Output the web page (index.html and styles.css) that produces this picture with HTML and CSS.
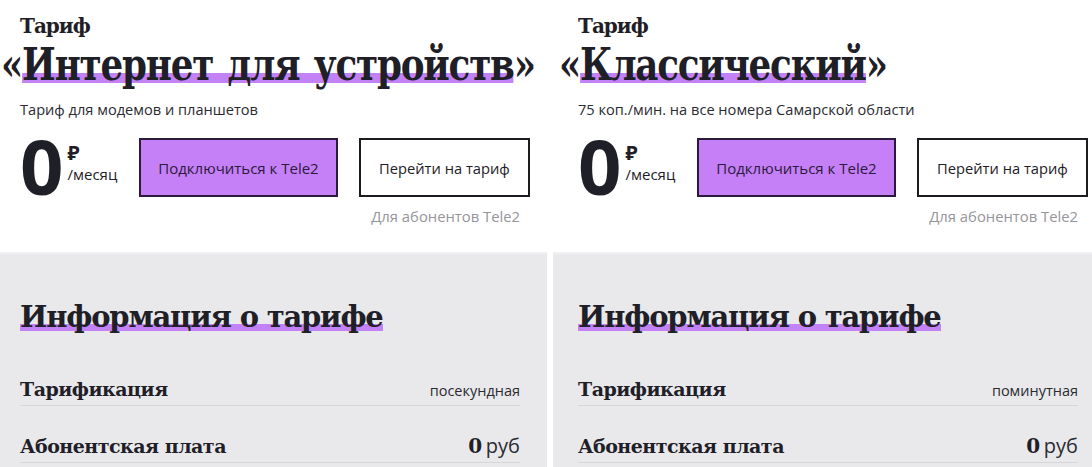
FILE: index.html
```html
<!DOCTYPE html>
<html lang="ru">
<head>
<meta charset="utf-8">
<link rel="stylesheet" href="styles.css">
</head>
<body>
<div class="page">
  <section class="panel">
    <div class="top">
      <div class="kicker">Тариф</div>
      <h1 class="title">«<span class="hl">Интернет для устройств</span>»</h1>
      <p class="sub">Тариф для модемов и планшетов</p>
      <div class="row">
        <div class="price">
          <span class="zero">0</span>
          <span class="per"><span class="rub">₽</span><span class="mon">/месяц</span></span>
        </div>
        <a class="btn btn-primary">Подключиться к Tele2</a>
        <div class="alt">
          <a class="btn btn-outline">Перейти на тариф</a>
          <span class="note">Для абонентов Tele2</span>
        </div>
      </div>
    </div>
    <div class="info">
      <h2 class="info-title"><span class="hl2">Информация о тарифе</span></h2>
      <div class="line"><span class="lbl">Тарификация</span><span class="val">посекундная</span></div>
      <div class="line"><span class="lbl">Абонентская плата</span><span class="val"><b>0</b> <span class="cur">руб</span></span></div>
    </div>
  </section>
  <section class="panel">
    <div class="top">
      <div class="kicker">Тариф</div>
      <h1 class="title">«<span class="hl">Классический</span>»</h1>
      <p class="sub">75 коп./мин. на все номера Самарской области</p>
      <div class="row">
        <div class="price">
          <span class="zero">0</span>
          <span class="per"><span class="rub">₽</span><span class="mon">/месяц</span></span>
        </div>
        <a class="btn btn-primary">Подключиться к Tele2</a>
        <div class="alt">
          <a class="btn btn-outline">Перейти на тариф</a>
          <span class="note">Для абонентов Tele2</span>
        </div>
      </div>
    </div>
    <div class="info">
      <h2 class="info-title"><span class="hl2">Информация о тарифе</span></h2>
      <div class="line"><span class="lbl">Тарификация</span><span class="val">поминутная</span></div>
      <div class="line"><span class="lbl">Абонентская плата</span><span class="val"><b>0</b> <span class="cur">руб</span></span></div>
    </div>
  </section>
</div>
</body>
</html>
```
FILE: styles.css
```css
html, body {
  margin: 0;
  padding: 0;
  background: #fff;
  overflow: hidden;
}
body {
  width: 1092px;
  height: 467px;
  color: #1f2027;
  font-family: "Open Sans", "Noto Sans", sans-serif;
}
.page {
  display: flex;
  gap: 6px;
  margin-left: -5px;
  width: 1110px;
  height: 467px;
}
.panel {
  width: 552px;
  flex: none;
  display: flex;
  flex-direction: column;
  height: 467px;
}
.top {
  background: #fff;
  padding: 14px 27px 0 25px;
  height: 242px;
  flex: none;
  box-sizing: border-box;
}
.kicker {
  font-family: "DejaVu Serif", serif;
  font-weight: bold;
  font-size: 20px;
  line-height: 24px;
  letter-spacing: -1px;
}
.title {
  margin: 2px 0 0 -19px;
  font-family: "DejaVu Serif", serif;
  font-weight: bold;
  font-size: 44px;
  line-height: 50px;
  letter-spacing: -1.5px;
  word-spacing: 4px;
  white-space: nowrap;
  transform: scaleX(0.812);
  transform-origin: left center;
}
.hl {
  background: linear-gradient(to bottom, transparent 34px, #c381f6 34px, #c381f6 44px, transparent 44px);
}
.sub {
  margin: 9px 0 0;
  font-size: 14.6px;
  line-height: 20px;
  color: #2a2b31;
}
.row {
  display: flex;
  align-items: flex-start;
  margin-top: 19px;
}
.price {
  display: flex;
  width: 119px;
  flex: none;
}
.zero {
  font-family: "Open Sans", sans-serif;
  font-weight: 700;
  font-size: 76px;
  line-height: 60px;
  letter-spacing: -2px;
  margin-top: -2px;
}
.per {
  display: flex;
  flex-direction: column;
  margin-left: 6px;
}
.rub {
  font-weight: 700;
  font-size: 20px;
  line-height: 20px;
  margin-top: 5px;
}
.mon {
  font-size: 15px;
  line-height: 18px;
  margin-top: 2px;
}
.btn {
  display: flex;
  align-items: center;
  justify-content: center;
  box-sizing: border-box;
  height: 59px;
  font-size: 15px;
  color: #1f2027;
  border: 2px solid #1b1b20;
}
.btn-primary {
  width: 199px;
  background: #c57ff7;
  border-color: #2c1a3c;
  color: #2b1a3b;
}
.alt {
  margin-left: auto;
  margin-right: -10px;
  display: flex;
  flex-direction: column;
  align-items: flex-end;
}
.btn-outline {
  width: 171px;
  background: #fff;
  font-size: 14.7px;
}
.note {
  margin-top: 9px;
  margin-right: 10px;
  font-size: 14.8px;
  line-height: 20px;
  color: #95959a;
}
.info {
  background: #e9e9ec;
  border-top: 2px solid #f1f1f3;
  margin-top: 10px;
  padding: 43px 27px 0 25px;
  flex: 1;
  min-height: 0;
}
.info-title {
  margin: 0 0 40px;
  font-family: "DejaVu Serif", serif;
  font-weight: bold;
  font-size: 29px;
  line-height: 40px;
  letter-spacing: -1.2px;
  white-space: nowrap;
}
.hl2 {
  background: linear-gradient(to bottom, transparent 24px, #c381f6 24px, #c381f6 31px, transparent 31px);
}
.line {
  display: flex;
  justify-content: space-between;
  align-items: baseline;
  border-bottom: 1px solid #d6d6db;
  height: 29px;
  box-sizing: border-box;
  margin-bottom: 28px;
}
.lbl {
  font-family: "DejaVu Serif", serif;
  font-weight: bold;
  font-size: 19px;
  line-height: 24px;
  letter-spacing: -0.5px;
}
.val {
  font-size: 14.5px;
  line-height: 18px;
  color: #2a2b31;
}
.val b {
  font-family: "DejaVu Serif", serif;
  font-size: 20px;
  color: #1f2027;
}
.cur {
  font-size: 20px;
}
```
